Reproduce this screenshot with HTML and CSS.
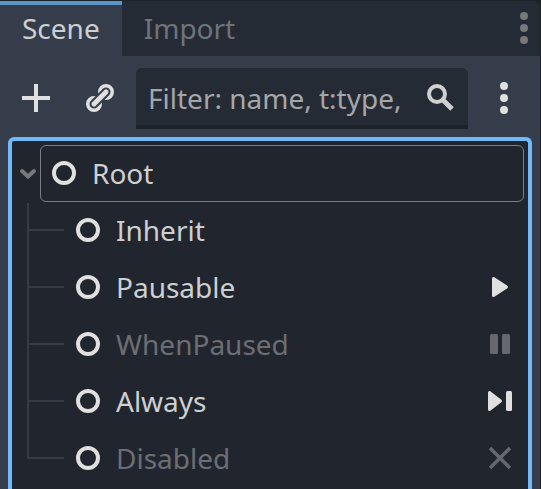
FILE: index.html
```html
<!DOCTYPE html>
<html lang="en">
<head>
<meta charset="utf-8">
<title>Scene dock</title>
<link rel="stylesheet" href="styles.css">
</head>
<body>
<svg class="defs" aria-hidden="true">
  <symbol id="node" viewBox="0 0 24 24"><circle cx="12" cy="12" r="10" fill="none" stroke="currentColor" stroke-width="4"/></symbol>
  <symbol id="dots" viewBox="0 0 8 32"><circle cx="4" cy="4" r="4"/><circle cx="4" cy="16" r="4"/><circle cx="4" cy="28" r="4"/></symbol>
</svg>
<main class="dock">
  <header class="tabs">
    <div class="tablist" role="tablist">
      <button class="tab active" role="tab" aria-selected="true">Scene</button>
      <button class="tab" role="tab" aria-selected="false">Import</button>
    </div>
    <button class="dock-menu" aria-label="Dock options"><svg class="dots"><use href="#dots"/></svg></button>
  </header>
  <div class="toolbar">
    <button class="tool" aria-label="Add node"><svg class="icon28" viewBox="0 0 28 28"><path d="M12 0h4v12h12v4H16v12h-4V16H0v-4h12z"/></svg></button>
    <button class="tool" aria-label="Instantiate scene"><svg class="icon28" viewBox="0 0 28 28"><g fill="none" stroke="currentColor" stroke-width="5"><circle cx="20" cy="8" r="5.500"/><circle cx="8" cy="20" r="5.500"/></g><path class="link-gap" d="M8 20L20 8"/><path class="link-bar" d="M8 20L20 8"/></svg></button>
    <label class="filter">
      <input type="text" aria-label="Filter nodes" placeholder="Filter: name, t:type,">
      <svg class="icon28" viewBox="0 0 28 28"><g fill="none" stroke="currentColor" stroke-width="4"><circle cx="11" cy="10" r="8"/><path d="M16 15l10 10" stroke-width="5"/></g></svg>
    </label>
    <button class="tool more" aria-label="Scene options"><svg class="dots"><use href="#dots"/></svg></button>
  </div>
  <section class="tree" aria-label="Scene tree">
    <div class="root">
      <button class="fold" aria-label="Collapse"><svg class="chevron" viewBox="0 0 16 12"><path d="M2 3l6 5.500L14 3" fill="none" stroke="currentColor" stroke-width="4" stroke-linecap="round"/></svg></button>
      <div class="row selected"><svg class="node"><use href="#node"/></svg><span class="name">Root</span></div>
    </div>
    <ul class="children">
      <li class="row"><svg class="node"><use href="#node"/></svg><span class="name">Inherit</span></li>
      <li class="row"><svg class="node"><use href="#node"/></svg><span class="name">Pausable</span><svg class="mode" viewBox="0 0 24 24"><path d="M4 3.500Q4.200 1.500 6 2L19 10.500Q21 12 19 13.500L6 22Q4.200 22.500 4 20.500z"/></svg></li>
      <li class="row dim"><svg class="node"><use href="#node"/></svg><span class="name">WhenPaused</span><svg class="mode" viewBox="0 0 24 24"><rect x="2" y="2" width="8" height="20" rx="1.500"/><rect x="14" y="2" width="8" height="20" rx="1.500"/></svg></li>
      <li class="row"><svg class="node"><use href="#node"/></svg><span class="name">Always</span><svg class="mode" viewBox="0 0 24 24"><path d="M0 3.500Q.200 1.500 2 2L13 10.500Q15 12 13 13.500L2 22Q.200 22.500 0 20.500z"/><rect x="18" y="2" width="6" height="20" rx="1.500"/></svg></li>
      <li class="row dim"><svg class="node"><use href="#node"/></svg><span class="name">Disabled</span><svg class="mode" viewBox="0 0 24 24"><path d="M2 2l20 20M22 2L2 22" fill="none" stroke="currentColor" stroke-width="3.500"/></svg></li>
    </ul>
  </section>
</main>
</body>
</html>
```
FILE: styles.css
```css
*, *::before, *::after { box-sizing: border-box; }
html, body { height: 100%; }
body {
  margin: 0;
  padding: 1px 1px 0 0;
  overflow: hidden;
  background: #1d2229;
  color: #cdcfd2;
  font: 28px/24px "Noto Sans", sans-serif;
}
svg { display: block; flex: none; fill: currentColor; }
.defs { position: absolute; width: 0; height: 0; }
button {
  margin: 0;
  padding: 0;
  border: 0;
  background: none;
  color: inherit;
  font: inherit;
}
.dock {
  display: flex;
  flex-direction: column;
  min-height: 100%;
  background: #363d4a;
  border-top-right-radius: 8px;
}
.tabs {
  display: flex;
  justify-content: space-between;
  background: #252b34;
  border-top-right-radius: 8px;
}
.tablist { display: flex; }
.tab {
  height: 55px;
  padding: 0 22px 6px;
  border-top: 4px solid transparent;
  color: #6f737a;
}
.tab.active {
  background: #363d4a;
  border-top-color: #5a96ca;
  color: #cdcfd2;
}
.dock-menu { padding: 0 12px 1px; color: #77797d; }
.dots { width: 8px; height: 32px; }
.toolbar {
  display: flex;
  align-items: center;
  gap: 36px;
  padding: 12px 32px 8px 22px;
}
.tool { padding-bottom: 1px; color: #e0e0e0; }
.icon28 { width: 28px; height: 28px; }
.link-gap { stroke: #363d4a; stroke-width: 9; stroke-linecap: round; }
.link-bar { stroke: #e0e0e0; stroke-width: 5; stroke-linecap: round; }
.filter {
  display: flex;
  align-items: center;
  flex: 1;
  min-width: 0;
  height: 61px;
  margin-left: -14px;
  margin-right: -4px;
  padding: 2px 14px 0 12px;
  background: #252b34;
  border-bottom: 4px solid #1d2229;
  border-radius: 6px 6px 0 0;
  color: #cfd0d1;
}
.filter input {
  flex: 1;
  min-width: 0;
  height: 38px;
  padding: 0;
  border: 0;
  outline: 0;
  background: none;
  color: #cdcfd2;
  font: inherit;
}
.filter input::placeholder { color: #a5a6a9; opacity: 1; }
.tree {
  flex: 1;
  margin: 0 8px;
  padding: 4px;
  background: #21262e;
  border: 4px solid #70bafa;
  border-bottom: 0;
  border-radius: 6px 6px 0 0;
}
.root { display: flex; }
.fold { width: 24px; padding-left: 4px; color: #77797d; }
.chevron { width: 16px; height: 12px; }
.row {
  display: flex;
  gap: 16px;
  height: 57px;
  padding: 16px 12px 17px 12px;
}
.selected {
  flex: 1;
  padding: 15px 11px;
  border: 1px solid #7b7e84;
  border-radius: 6px;
}
.node { width: 24px; height: 24px; color: #e0e0e0; }
.name { flex: 1; }
.mode { width: 24px; height: 24px; color: #e0e0e0; }
.children { margin: 0; padding: 0 0 0 11px; list-style: none; }
.children .row {
  position: relative;
  padding-left: 49px;
}
.children .row::before {
  content: "";
  position: absolute;
  left: 0;
  top: 0;
  width: 37px;
  height: 29px;
  border-left: 2px solid #363a42;
  border-bottom: 2px solid #363a42;
}
.children .row:first-child::before {
  top: 1px;
  height: 28px;
}
.children .row:not(:last-child)::after {
  content: "";
  position: absolute;
  left: 0;
  top: 29px;
  bottom: 0;
  width: 2px;
  background: #363a42;
}
.dim .name { color: #6b6e74; }
.dim .mode { color: #65686d; }
```
